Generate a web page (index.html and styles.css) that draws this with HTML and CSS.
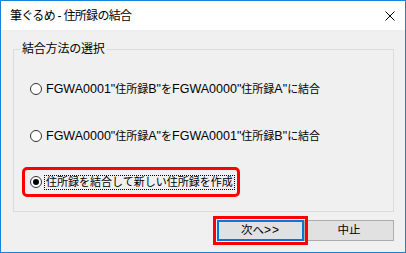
FILE: index.html
```html
<!DOCTYPE html>
<html lang="ja">
<head>
<meta charset="utf-8">
<title>筆ぐるめ - 住所録の結合</title>
<link rel="stylesheet" href="styles.css">
</head>
<body>
<div class="window">
  <div class="titlebar">
    <span class="title">筆ぐるめ - 住所録の結合</span>
    <svg class="close" width="10" height="10" viewBox="0 0 10 10"><path d="M0.5 0.5 L9.5 9.5 M9.5 0.5 L0.5 9.5" stroke="#000" stroke-width="1" fill="none"/></svg>
  </div>
  <div class="content">
    <div class="group">
      <span class="legend">結合方法の選択</span>
      <div class="opt first"><span class="radio"></span><span class="label"><span class="lat">FGWA0001"</span>住所録<span class="lat">B"</span>を<span class="lat">FGWA0000"</span>住所録<span class="lat">A"</span>に結合</span></div>
      <div class="opt second"><span class="radio"></span><span class="label"><span class="lat">FGWA0000"</span>住所録<span class="lat">A"</span>を<span class="lat">FGWA0001"</span>住所録<span class="lat">B"</span>に結合</span></div>
      <div class="opt third marked"><span class="radio checked"></span><span class="label focus">住所録を結合して新しい住所録を作成</span></div>
    </div>
    <div class="buttons">
      <button class="btn default marked">次へ<span class="lat">&gt;&gt;</span></button>
      <button class="btn cancel">中止</button>
    </div>
  </div>
</div>
</body>
</html>
```
FILE: styles.css
```css
* { box-sizing: border-box; }
html, body { margin: 0; padding: 0; background: #ffffff; }
body { font-family: "Liberation Sans", "Noto Sans CJK JP", sans-serif; font-size: 11px; color: #000; }

.window {
  width: 406px;
  height: 253px;
  border: 1px solid #1883d7;
  display: flex;
  flex-direction: column;
  background: #f0f0f0;
}
.titlebar {
  height: 29px;
  background: #ffffff;
  display: flex;
  align-items: center;
  justify-content: space-between;
  padding: 0 10px 0 9px;
}
.title { font-size: 12px; letter-spacing: -0.7px; line-height: 14px; }
.close { display: block; margin-top: 1px; }

.content {
  flex: 1;
  display: flex;
  flex-direction: column;
  padding: 19px 11px 0 12px;
}
.group {
  position: relative;
  height: 163px;
  border: 1px solid #dcdcdc;
  display: flex;
  flex-direction: column;
  align-items: flex-start;
  padding: 27px 0 0 11px;
}
.legend {
  position: absolute;
  left: 6px;
  top: -8px;
  padding: 0 2px;
  background: #f0f0f0;
  font-size: 12px;
  line-height: 14px;
  letter-spacing: -0.2px;
}
.opt {
  height: 24px;
  display: flex;
  align-items: center;
  padding: 0 3px 0 5px;
}
.second { margin-top: 23px; }
.third { margin-top: 22px; }
.marked {
  outline: 3px solid #ff0000;
  border-radius: 2px;
  position: relative;
  z-index: 1;
}
.radio {
  width: 12px;
  height: 12px;
  border: 1px solid #333333;
  border-radius: 50%;
  background: #ffffff;
  display: flex;
  align-items: center;
  justify-content: center;
  flex: none;
}
.radio.checked::after {
  content: "";
  width: 6px;
  height: 6px;
  border-radius: 50%;
  background: #000000;
}
.label {
  margin-left: 3px;
  padding: 0 1px;
  line-height: 13px;
  white-space: nowrap;
}
.lat { font-size: 12.5px; }
.focus { outline: 1px dotted #000000; }

.buttons {
  display: flex;
  justify-content: flex-end;
  margin-top: 8px;
}
.btn {
  font-family: "Liberation Sans", "Noto Sans CJK JP", sans-serif;
  font-size: 11.5px;
  line-height: 13px;
  height: 21px;
  background: #e1e1e1;
  border: 1px solid #adadad;
  border-radius: 0;
  padding: 0;
  color: #000;
}
.btn .lat { font-size: 12px; letter-spacing: 1px; }
.default {
  width: 87px;
  border: 2px solid #0078d7;
  outline-offset: 1px;
}
.cancel { width: 90px; }
```
